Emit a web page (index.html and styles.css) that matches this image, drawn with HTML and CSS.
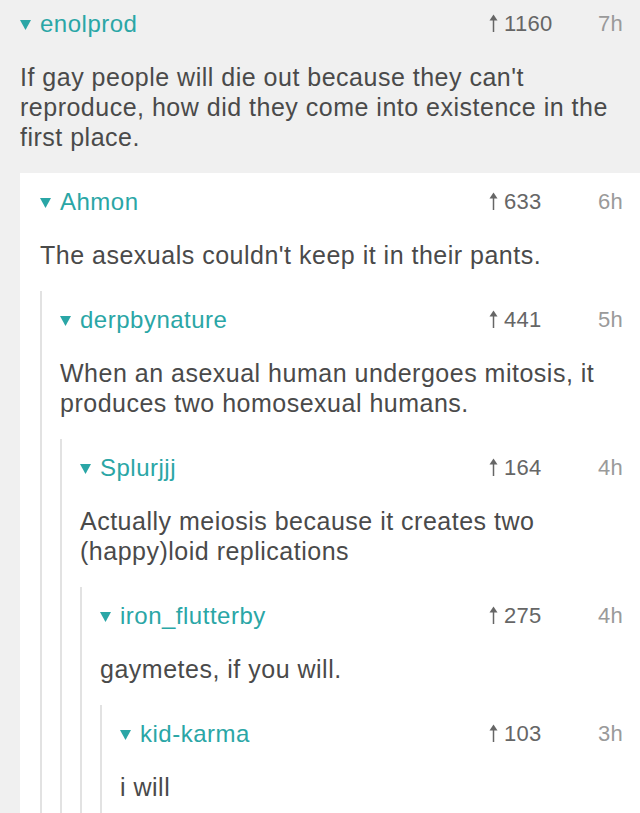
FILE: index.html
```html
<!DOCTYPE html>
<html>
<head>
<meta charset="utf-8">
<link rel="stylesheet" href="styles.css">
</head>
<body>
<div class="thread">
  <div class="comment root">
    <div class="head">
      <span class="name"><svg class="tri" width="11" height="10" viewBox="0 0 11 10"><polygon points="0,0 11,0 5.5,10" /></svg>enolprod</span>
      <span class="vote"><svg class="arrow" width="9" height="19" viewBox="0 0 9 19"><path d="M4.5 18V4" /><polygon points="0.5,6.5 4.5,0.5 8.5,6.5" /></svg>1160</span>
      <span class="time">7h</span>
    </div>
    <p class="body">If gay people will die out because they can't reproduce, how did they come into existence in the first place.</p>

    <div class="comment card">
      <div class="head">
        <span class="name"><svg class="tri" width="11" height="10" viewBox="0 0 11 10"><polygon points="0,0 11,0 5.5,10" /></svg>Ahmon</span>
        <span class="vote"><svg class="arrow" width="9" height="19" viewBox="0 0 9 19"><path d="M4.5 18V4" /><polygon points="0.5,6.5 4.5,0.5 8.5,6.5" /></svg>633</span>
        <span class="time">6h</span>
      </div>
      <p class="body">The asexuals couldn't keep it in their pants.</p>

      <div class="comment nested">
        <div class="head">
          <span class="name"><svg class="tri" width="11" height="10" viewBox="0 0 11 10"><polygon points="0,0 11,0 5.5,10" /></svg>derpbynature</span>
          <span class="vote"><svg class="arrow" width="9" height="19" viewBox="0 0 9 19"><path d="M4.5 18V4" /><polygon points="0.5,6.5 4.5,0.5 8.5,6.5" /></svg>441</span>
          <span class="time">5h</span>
        </div>
        <p class="body">When an asexual human undergoes mitosis, it produces two homosexual humans.</p>

        <div class="comment nested">
          <div class="head">
            <span class="name"><svg class="tri" width="11" height="10" viewBox="0 0 11 10"><polygon points="0,0 11,0 5.5,10" /></svg>Splurjjj</span>
            <span class="vote"><svg class="arrow" width="9" height="19" viewBox="0 0 9 19"><path d="M4.5 18V4" /><polygon points="0.5,6.5 4.5,0.5 8.5,6.5" /></svg>164</span>
            <span class="time">4h</span>
          </div>
          <p class="body">Actually meiosis because it creates two (happy)loid replications</p>

          <div class="comment nested">
            <div class="head">
              <span class="name"><svg class="tri" width="11" height="10" viewBox="0 0 11 10"><polygon points="0,0 11,0 5.5,10" /></svg>iron_flutterby</span>
              <span class="vote"><svg class="arrow" width="9" height="19" viewBox="0 0 9 19"><path d="M4.5 18V4" /><polygon points="0.5,6.5 4.5,0.5 8.5,6.5" /></svg>275</span>
              <span class="time">4h</span>
            </div>
            <p class="body">gaymetes, if you will.</p>

            <div class="comment nested">
              <div class="head">
                <span class="name"><svg class="tri" width="11" height="10" viewBox="0 0 11 10"><polygon points="0,0 11,0 5.5,10" /></svg>kid-karma</span>
                <span class="vote"><svg class="arrow" width="9" height="19" viewBox="0 0 9 19"><path d="M4.5 18V4" /><polygon points="0.5,6.5 4.5,0.5 8.5,6.5" /></svg>103</span>
                <span class="time">3h</span>
              </div>
              <p class="body">i will</p>
              <div class="spacer"></div>
            </div>
          </div>
        </div>
      </div>
    </div>
  </div>
</div>
</body>
</html>
```

FILE: styles.css
```css
html, body {
  margin: 0;
  padding: 0;
  background: #f0f0f0;
  height: 813px;
  overflow: hidden;
}

.thread {
  font-family: "Liberation Sans", Arial, sans-serif;
  color: #4a4a4a;
}

.comment {
  padding-top: 9px;
}

.root {
  padding-left: 20px;
  background: #f0f0f0;
}

.card {
  background: #ffffff;
  padding-left: 20px;
  padding-top: 14px;
}

.nested {
  border-left: 2px solid #e2e2e2;
  padding-left: 18px;
  padding-top: 14px;
}

.head {
  display: flex;
  align-items: center;
  height: 30px;
  padding-right: 17px;
}

.name {
  flex: 1;
  display: flex;
  align-items: center;
  color: #2aa6a6;
  font-size: 24px;
  letter-spacing: 0.5px;
}

.tri {
  fill: #2aa6a6;
  margin-right: 9px;
  margin-top: 2px;
}

.vote {
  width: 94px;
  display: flex;
  align-items: center;
  color: #666666;
  font-size: 22px;
  letter-spacing: 0.3px;
}

.arrow {
  fill: #666666;
  stroke: #666666;
  stroke-width: 1.5;
  margin-right: 6px;
  margin-top: -2px;
}

.arrow polygon {
  stroke: none;
}

.time {
  width: 40px;
  text-align: right;
  color: #9a9a9a;
  font-size: 22px;
  letter-spacing: 0.3px;
}

.body {
  margin: 23px 0 21px 0;
  padding-right: 20px;
  font-size: 25px;
  letter-spacing: 0.5px;
  line-height: 30px;
}

.spacer {
  height: 100px;
}
```
